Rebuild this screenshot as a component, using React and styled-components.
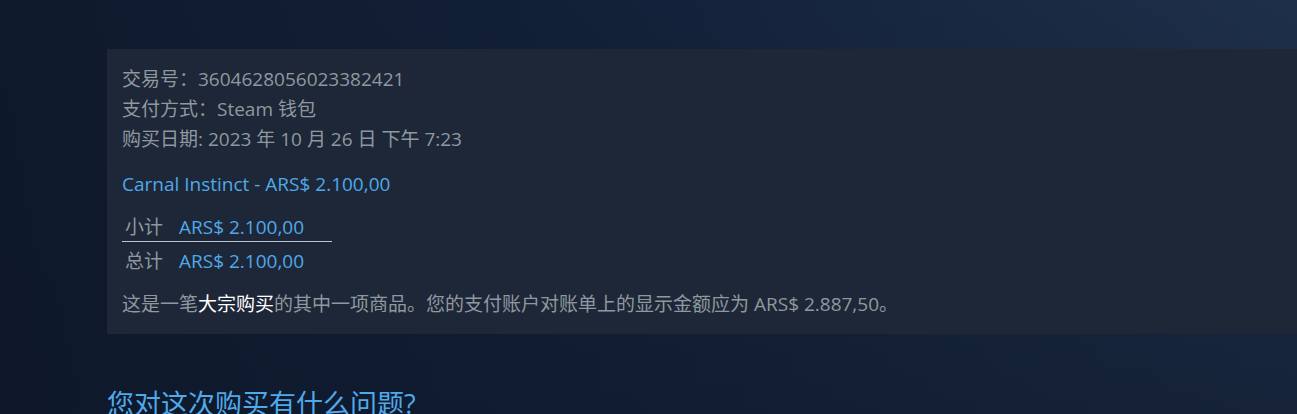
import React from "react";
import styled, { createGlobalStyle } from "styled-components";

const Global = createGlobalStyle`
  html, body { margin: 0; padding: 0; }
  body {
    background: #0f1a2c;
    font-family: "Open Sans", "Noto Sans CJK SC", sans-serif;
  }
`;

const Page = styled.div`
  min-height: 414px;
  overflow: hidden;
  padding: 49px 0 0 107px;
  box-sizing: border-box;
  background:
    linear-gradient(to bottom, rgba(15, 26, 44, 0) 0%, rgba(14, 24, 42, 0.55) 100%),
    linear-gradient(to right, #0e192b 0%, #122038 45%, #1a2a43 80%, #1e2f4a 100%);
`;

const Receipt = styled.div`
  background: #1e2737;
  padding: 15px;
  color: #8f98a0;
  font-size: 19px;
  line-height: 30px;
`;

const Line = styled.div`
  margin-top: ${(p) => p.$gap || 0}px;
  color: ${(p) => (p.$blue ? "#4fa9ea" : "inherit")};
  white-space: nowrap;
`;

const Totals = styled.table`
  border-collapse: collapse;
  margin-top: 12px;
  font-size: 19px;
`;

const Row = styled.tr`
  border-bottom: ${(p) => (p.$rule ? "1px solid #b8c6d3" : "none")};
`;

const Label = styled.td`
  color: #8f98a0;
  padding: ${(p) => (p.$first ? "2px 16px 0 3px" : "5px 16px 0 3px")};
  line-height: 28px;
  white-space: nowrap;
`;

const Amount = styled.td`
  color: #4fa9ea;
  padding: ${(p) => (p.$first ? "2px 28px 0 0" : "5px 28px 0 0")};
  line-height: 28px;
  white-space: nowrap;
`;

const Highlight = styled.span`
  color: #ffffff;
`;

const Heading = styled.h2`
  margin: 54px 0 0 0;
  font-weight: normal;
  font-size: 27px;
  line-height: 32px;
  color: #4fa9ea;
`;

export default function App() {
  return (
    <>
      <Global />
      <Page>
        <Receipt>
          <Line>交易号：3604628056023382421</Line>
          <Line>支付方式：Steam 钱包</Line>
          <Line>购买日期: 2023 年 10 月 26 日 下午 7:23</Line>
          <Line $gap={15} $blue>
            Carnal Instinct - ARS$ 2.100,00
          </Line>
          <Totals>
            <tbody>
              <Row $rule>
                <Label $first>小计</Label>
                <Amount $first>ARS$ 2.100,00</Amount>
              </Row>
              <Row>
                <Label>总计</Label>
                <Amount>ARS$ 2.100,00</Amount>
              </Row>
            </tbody>
          </Totals>
          <Line $gap={14}>
            这是一笔<Highlight>大宗购买</Highlight>的其中一项商品。您的支付账户对账单上的显示金额应为 ARS$ 2.887,50。
          </Line>
        </Receipt>
        <Heading>您对这次购买有什么问题?</Heading>
      </Page>
    </>
  );
}
